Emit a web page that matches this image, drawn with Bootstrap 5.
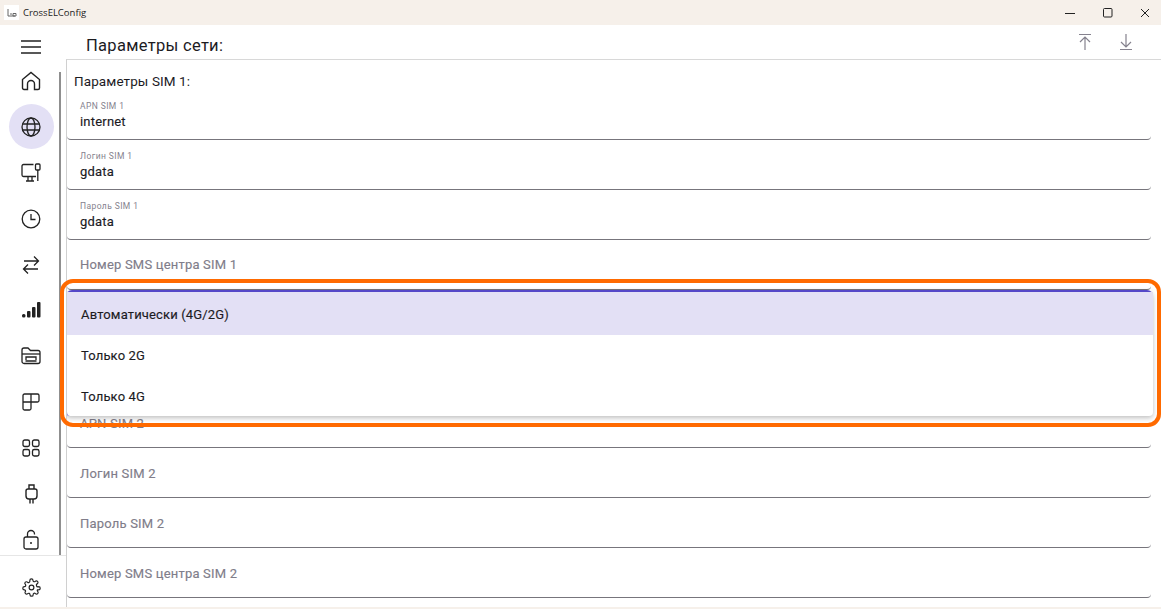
<!DOCTYPE html>
<html lang="en">
<head>
  <meta charset="UTF-8">
  <title>CrossELConfig</title>
  <link href="https://cdn.jsdelivr.net/npm/bootstrap@5.3.0/dist/css/bootstrap.min.css" rel="stylesheet">
  <style>
    html,body{height:100%;overflow:hidden}
    body{font-family:Roboto,"Noto Sans",sans-serif;color:#1c1b1f;background:#fff}
    .win-title{height:25px;background:#f6f0ea;font:9.5px "Open Sans",sans-serif;color:#222}
    .win-btn{width:37.5px;height:25px;padding-right:11px}
    .top-row{height:34px}
    .burger-cell{width:65px;margin-top:10px}
    .page-title{font-size:16.5px;line-height:20px;margin-left:21px;letter-spacing:.3px;padding-top:7px}
    .act-btn{width:41px;height:34px}
    .act-last{margin-right:15px}
    .main-row{height:548px;overflow:hidden}
    .rail{width:66px;height:548px;margin-top:-1px}
    .rail-list{height:497px;position:relative}
    .rail-bar{position:absolute;right:5px;top:14px;bottom:0;width:2px;background:#8f8f8f}
    .rail-item{height:45.9px}
    .rail-active{width:45px;height:45px;background:#e3e0f5}
    .rail-foot{border-top:1px solid #e6e6e6;height:52px}
    .gear-ico{margin-top:11px}
    .content-pane{position:relative;border-top:1px solid #d8d8d8;border-left:1px solid #d0d0d0;height:548px;overflow:hidden}
    .sim-head{font-size:13.5px;height:30px;padding:13px 0 0 7px;line-height:16px;letter-spacing:.1px}
    .net-field{height:50px;margin-right:10px;border-bottom:1px solid #77757c;border-bottom-left-radius:4px;border-bottom-right-radius:4px;padding-left:13px}
    .field-small{font-size:8.5px;line-height:10px;color:#85828e;padding-top:11px;letter-spacing:.4px}
    .field-val{font-size:13px;line-height:16px;padding-top:3px;letter-spacing:.2px;-webkit-text-stroke:.15px #1c1b1f}
    .field-empty{font-size:13px;line-height:16px;color:#807d8a;padding-top:17px;letter-spacing:.2px;-webkit-text-stroke:.15px #807d8a}
    .field-gap ~ .net-field .field-empty{padding-top:18px}
    .field-gap{height:108px;margin-right:10px}
    .sim-menu{position:absolute;left:-1px;top:230px;width:1087px;height:126px;background:#fff;border-top:2px solid #5548c8;border-left:1px solid #5548c8;border-radius:6px 6px 4px 4px;box-shadow:0 2px 5px rgba(0,0,0,.25)}
    .sim-opt{height:41px;padding-left:14px;font-size:13px;letter-spacing:.15px;display:flex;align-items:center;-webkit-text-stroke:.15px #1c1b1f}
    .sim-opt-on{height:43px;padding-top:2px;background:#e3e0f5}
    .note-frame{position:absolute;left:60px;top:279px;width:1101px;height:148px;border:4px solid #ff6a00;border-radius:13px;pointer-events:none}
    .win-foot{height:2px;background:#f6f0ea}
    svg{display:block}
  </style>
</head>
<body>
  <div class="win-title d-flex align-items-center">
    <svg class="ms-1 me-1" width="15" height="15" viewBox="0 0 15 15"><rect width="15" height="15" fill="#fff"/><path d="M4 4v7h7M6 9h2M9 8.500h3v2.500H9z" fill="none" stroke="#666"/></svg>
    <span>CrossELConfig</span>
    <div class="ms-auto d-flex">
      <div class="win-btn d-flex align-items-center justify-content-end"><svg width="10" height="10"><path d="M0 5.500h10" stroke="#222"/></svg></div>
      <div class="win-btn d-flex align-items-center justify-content-end"><svg width="10" height="10"><rect x=".5" y=".5" width="8.500" height="8.500" rx="1" fill="none" stroke="#222"/></svg></div>
      <div class="win-btn d-flex align-items-center justify-content-end"><svg width="10" height="10"><path d="M1 1l8 8M9 1l-8 8" stroke="#222"/></svg></div>
    </div>
  </div>

  <div class="top-row d-flex align-items-center">
    <div class="burger-cell d-flex justify-content-center"><svg width="20" height="14" class="me-1"><path d="M0 1h20M0 7h20M0 13h20" stroke="#222" stroke-width="1.300"/></svg></div>
    <div class="page-title">Параметры сети:</div>
    <div class="ms-auto d-flex">
      <div class="act-btn d-flex align-items-center justify-content-center"><svg width="16" height="18" viewBox="0 0 16 18" fill="none" stroke="#85828e" stroke-width="1.200"><path d="M2 1.500h12M8 4v13M3 9l5-5 5 5"/></svg></div>
      <div class="act-btn act-last d-flex align-items-center justify-content-center"><svg width="16" height="18" viewBox="0 0 16 18" fill="none" stroke="#85828e" stroke-width="1.200"><path d="M2 16.500h12M8 1v13M3 9l5 5 5-5"/></svg></div>
    </div>
  </div>

  <div class="main-row d-flex">
    <div class="rail flex-shrink-0">
      <div class="rail-list">
        <div class="rail-bar"></div>
        <div class="rail-item d-flex align-items-center justify-content-center me-1"><svg width="20" height="20" viewBox="0 0 20 20" fill="none" stroke="#222" stroke-width="1.400"><path d="M1.500 8.500L10 1.500l8.500 7V17a1.500 1.500 0 0 1-1.500 1.500h-3.500V13a3.500 3.500 0 0 0-7 0v5.500H3A1.500 1.500 0 0 1 1.500 17z"/></svg></div>
        <div class="rail-item d-flex align-items-center justify-content-center me-1"><div class="rail-active rounded-circle d-flex align-items-center justify-content-center"><svg width="20" height="20" viewBox="0 0 20 20" fill="none" stroke="#222" stroke-width="1.300"><circle cx="10" cy="10" r="9"/><ellipse cx="10" cy="10" rx="4" ry="9"/><path d="M1.500 7h17M1.500 13h17"/></svg></div></div>
        <div class="rail-item d-flex align-items-center justify-content-center me-1"><svg width="20" height="20" viewBox="0 0 20 20" fill="none" stroke="#222" stroke-width="1.300"><path d="M12.500 1.500H2.500a1.500 1.500 0 0 0-1.500 1.500v9a1.500 1.500 0 0 0 1.500 1.500H15M5 18h8M7 14v4M11 14v4"/><rect x="14.500" y="1" width="4.500" height="6" rx="1"/><path d="M16.800 7v11"/></svg></div>
        <div class="rail-item d-flex align-items-center justify-content-center me-1"><svg width="20" height="20" viewBox="0 0 20 20" fill="none" stroke="#222" stroke-width="1.300"><circle cx="10" cy="10" r="8.800"/><path d="M10 5v5.500h4.500"/></svg></div>
        <div class="rail-item d-flex align-items-center justify-content-center me-1"><svg width="18" height="20" viewBox="0 0 18 20" fill="none" stroke="#222" stroke-width="1.300"><path d="M2 6h14.500M12 1.500L16.500 6 12 10.500M16 14H1.500M6 9.500L1.500 14 6 18.500"/></svg></div>
        <div class="rail-item d-flex align-items-center justify-content-center me-1"><svg width="19" height="16" viewBox="0 0 19 16" fill="#222"><rect x="0" y="12" width="3.500" height="3.500" rx="1.500"/><rect x="5" y="9" width="3.500" height="6.500" rx="1"/><rect x="10" y="5" width="3.500" height="10.500" rx="1"/><rect x="15" y="0" width="3.500" height="15.500" rx="1"/></svg></div>
        <div class="rail-item d-flex align-items-center justify-content-center me-1"><svg width="20" height="18" viewBox="0 0 20 18" fill="none" stroke="#222" stroke-width="1.300"><path d="M1 14.500V3a2 2 0 0 1 2-2h4l2.500 2.500H17a2 2 0 0 1 2 2v9a2 2 0 0 1-2 2H3a2 2 0 0 1-2-2z"/><path d="M1 7h18"/><path d="M5 13v-3h10v3M4.500 14h11"/></svg></div>
        <div class="rail-item d-flex align-items-center justify-content-center me-1"><svg width="18" height="18" viewBox="0 0 18 18" fill="none" stroke="#222" stroke-width="1.300"><path d="M9 9V1h6.500A1.500 1.500 0 0 1 17 2.500V7.500A1.500 1.500 0 0 1 15.500 9H1M1 9V2.500A1.500 1.500 0 0 1 2.500 1H9M1 9v6.500A1.500 1.500 0 0 0 2.500 17H7.500A1.500 1.500 0 0 0 9 15.500V9"/></svg></div>
        <div class="rail-item d-flex align-items-center justify-content-center me-1"><svg width="18" height="18" viewBox="0 0 18 18" fill="none" stroke="#222" stroke-width="1.300"><rect x="1" y="1" width="6.500" height="6.500" rx="1.800"/><rect x="10.500" y="1" width="6.500" height="6.500" rx="1.800"/><rect x="1" y="10.500" width="6.500" height="6.500" rx="1.800"/><rect x="10.500" y="10.500" width="6.500" height="6.500" rx="1.800"/></svg></div>
        <div class="rail-item d-flex align-items-center justify-content-center me-1"><svg width="13" height="20" viewBox="0 0 13 20" fill="none" stroke="#222" stroke-width="1.400"><path d="M4 5V1h5v4M3 5h7a2 2 0 0 1 2 2v5a3 3 0 0 1-3 3H4a3 3 0 0 1-3-3V7a2 2 0 0 1 2-2zM5 15v4.500M8 15v4.500"/></svg></div>
        <div class="rail-item d-flex align-items-center justify-content-center me-1"><svg width="16" height="21" viewBox="0 0 16 21" fill="none" stroke="#222" stroke-width="1.300"><rect x="1" y="8" width="14" height="12" rx="2"/><path d="M4.500 8V5a3.500 3.500 0 0 1 7 0v.500"/><circle cx="8" cy="14" r="1" fill="#222" stroke="none"/></svg></div>
      </div>
      <div class="rail-foot d-flex align-items-center justify-content-center"><svg class="me-1 gear-ico" width="19" height="19" viewBox="0 0 24 24" fill="none" stroke="#222" stroke-width="1.500"><circle cx="12" cy="12" r="3"/><path d="M19.400 15a1.650 1.650 0 0 0 .33 1.820l.06.06a2 2 0 1 1-2.830 2.830l-.06-.06a1.650 1.650 0 0 0-2.800 1.170V21a2 2 0 1 1-4 0v-.09a1.650 1.650 0 0 0-2.800-1.170l-.06.06a2 2 0 1 1-2.830-2.830l.06-.06A1.650 1.650 0 0 0 3.090 15H3a2 2 0 1 1 0-4h.09a1.650 1.650 0 0 0 1.170-2.800l-.06-.06a2 2 0 1 1 2.830-2.830l.06.06A1.650 1.650 0 0 0 9.900 4.200V3a2 2 0 1 1 4 0v.09a1.650 1.650 0 0 0 2.800 1.170l.06-.06a2 2 0 1 1 2.830 2.830l-.06.06A1.650 1.650 0 0 0 20.910 11H21a2 2 0 1 1 0 4z"/></svg></div>
    </div>

    <div class="content-pane flex-grow-1">
      <div class="sim-head">Параметры SIM 1:</div>
      <div class="net-field"><div class="field-small">APN SIM 1</div><div class="field-val">internet</div></div>
      <div class="net-field"><div class="field-small">Логин SIM 1</div><div class="field-val">gdata</div></div>
      <div class="net-field"><div class="field-small">Пароль SIM 1</div><div class="field-val">gdata</div></div>
      <div class="net-field"><div class="field-empty">Номер SMS центра SIM 1</div></div>
      <div class="field-gap"></div>
      <div class="net-field"><div class="field-empty">APN SIM 2</div></div>
      <div class="net-field"><div class="field-empty">Логин SIM 2</div></div>
      <div class="net-field"><div class="field-empty">Пароль SIM 2</div></div>
      <div class="net-field"><div class="field-empty">Номер SMS центра SIM 2</div></div>

      <div class="sim-menu">
        <div class="sim-opt sim-opt-on">Автоматически (4G/2G)</div>
        <div class="sim-opt">Только 2G</div>
        <div class="sim-opt">Только 4G</div>
      </div>
    </div>
  </div>
  <div class="win-foot"></div>

  <div class="note-frame"></div>

  <script src="https://cdn.jsdelivr.net/npm/bootstrap@5.3.0/dist/js/bootstrap.bundle.min.js"></script>
</body>
</html>
